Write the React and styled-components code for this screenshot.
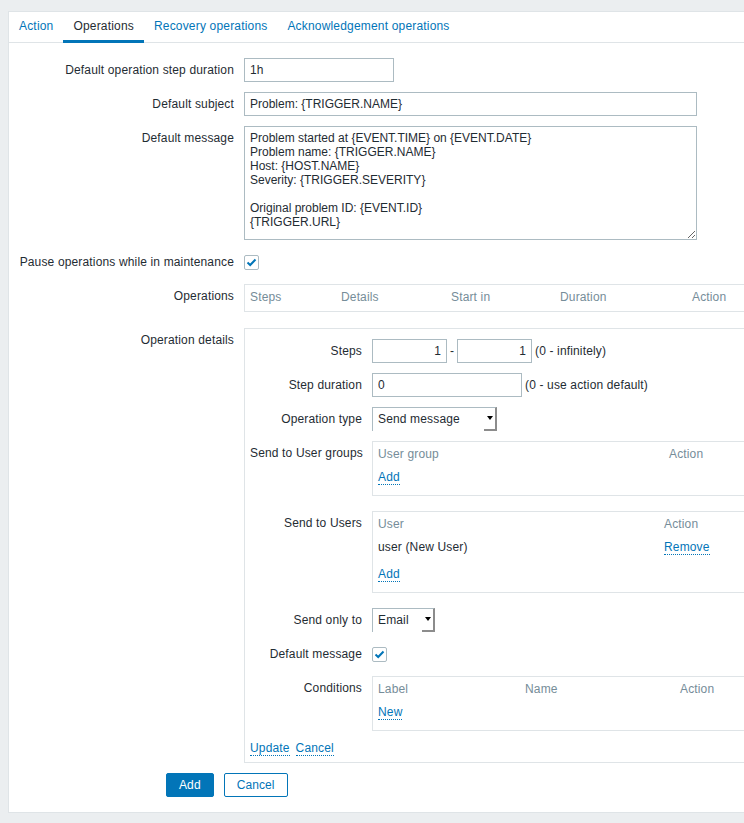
import React from 'react';
import styled, { createGlobalStyle } from 'styled-components';

const GlobalStyle = createGlobalStyle`
  html, body {
    margin: 0;
    overflow: hidden;
    background: #ebeef0;
    font: 12px "Liberation Sans", Arial, sans-serif;
    letter-spacing: 0.15px;
    color: #1f2c33;
  }
`;

const Wrapper = styled.div`
  padding: 11px 0 0 8px;
`;

const Panel = styled.div`
  width: 900px;
  background: #fff;
  border: 1px solid #dfe4e7;
  padding-bottom: 15px;
`;

const TabBar = styled.ul`
  display: flex;
  height: 30px;
  margin: 0;
  padding: 0;
  list-style: none;
  border-bottom: 1px solid #dfe4e7;
`;

const Tab = styled.li`
  box-sizing: border-box;
  height: 31px;
  margin-bottom: -1px;
  padding: 0 10px;
  line-height: 28px;
  letter-spacing: 0.18px;
  color: ${p => (p.$active ? '#1f2c33' : '#0275b8')};
  border-bottom: 3px solid ${p => (p.$active ? '#0275b8' : 'transparent')};
  cursor: pointer;
`;

const Form = styled.div`
  padding: 15px 10px 0;
`;

const Row = styled.div`
  display: grid;
  grid-template-columns: ${p => p.$label}px 1fr;
  column-gap: 10px;
  margin-bottom: ${p => p.$gap ?? 10}px;
`;

const Label = styled.div`
  text-align: right;
  line-height: 24px;
  white-space: nowrap;
`;

const Field = styled.div`
  display: flex;
  align-items: center;
  min-height: 24px;
  white-space: nowrap;
`;

const TextInput = styled.input`
  box-sizing: border-box;
  width: ${p => p.$width}px;
  height: 24px;
  margin: 0;
  padding: 0 5px;
  border: 1px solid #acbbc2;
  font: inherit;
  letter-spacing: 0;
  color: inherit;
  text-align: ${p => p.$align || 'left'};
  outline: none;
`;

const TextArea = styled.textarea`
  display: block;
  box-sizing: border-box;
  width: 453px;
  height: 114px;
  margin: 0;
  padding: 4px 5px;
  border: 1px solid #acbbc2;
  font: 12px/14px "Liberation Sans", Arial, sans-serif;
  letter-spacing: 0;
  color: inherit;
  outline: none;
`;

const Hint = styled.span`
  margin-left: 3px;
`;

const Dash = styled.span`
  width: 10px;
  text-align: center;
`;

const Select = styled.div`
  box-sizing: border-box;
  display: flex;
  width: ${p => p.$width}px;
  height: 24px;
  border: 1px solid #acbbc2;
  border-right: none;
  border-bottom: none;
`;

const SelectText = styled.span`
  flex: 1;
  padding-left: 5px;
  line-height: 22px;
`;

const SelectButton = styled.span`
  box-sizing: border-box;
  width: 13px;
  display: flex;
  align-items: center;
  justify-content: center;
  border-right: 2px solid #8c8c8c;
  border-bottom: 2px solid #8c8c8c;
  border-top: 1px solid #acbbc2;
  margin-top: -1px;
  padding-bottom: 1px;

  &::after {
    content: '';
    border-left: 3px solid transparent;
    border-right: 3px solid transparent;
    border-top: 4px solid #000;
  }
`;

const CheckBox = styled.span`
  box-sizing: border-box;
  display: inline-flex;
  align-items: center;
  justify-content: center;
  width: 15px;
  height: 15px;
  border: 1px solid #acbbc2;
  border-radius: 2px;
  background: #fff;
`;

const ListBox = styled.div`
  box-sizing: border-box;
  width: ${p => p.$width}px;
  border: 1px solid #dfe4e7;
  padding: 1px 5px 3px;
`;

const ListRow = styled.div`
  display: grid;
  grid-template-columns: ${p => p.$cols};
  height: ${p => (p.$head ? 22 : 27)}px;
  line-height: ${p => (p.$head ? 22 : 24)}px;
  color: ${p => (p.$head ? '#768d99' : '#1f2c33')};
  white-space: nowrap;
`;

const Link = styled.a`
  color: #0275b8;
  text-decoration: none;
  border-bottom: 1px dotted #0275b8;
  line-height: 14px;
  cursor: pointer;
`;

const DetailsBox = styled.div`
  box-sizing: border-box;
  width: 560px;
  border: 1px solid #dfe4e7;
  padding: 10px 5px 6px;
`;

const InlineActions = styled.div`
  display: flex;
  gap: 6px;
  line-height: 16px;
`;

const ButtonBar = styled.div`
  display: flex;
  gap: 10px;
  margin: 10px 0 0 147px;
`;

const Button = styled.button`
  height: 24px;
  padding: 0 12px;
  border: 1px solid #0275b8;
  border-radius: 2px;
  background: ${p => (p.$primary ? '#0275b8' : '#fff')};
  color: ${p => (p.$primary ? '#fff' : '#0275b8')};
  font: inherit;
  letter-spacing: 0.1px;
  cursor: pointer;
`;

function Check() {
  return (
    <CheckBox>
      <svg width="11" height="11" viewBox="0 0 11 11">
        <path d="M1.5 5.5 L4.2 8 L9.5 2.5" fill="none" stroke="#0275b8" strokeWidth="2" />
      </svg>
    </CheckBox>
  );
}

const message = `Problem started at {EVENT.TIME} on {EVENT.DATE}
Problem name: {TRIGGER.NAME}
Host: {HOST.NAME}
Severity: {TRIGGER.SEVERITY}

Original problem ID: {EVENT.ID}
{TRIGGER.URL}`;

const tabs = ['Action', 'Operations', 'Recovery operations', 'Acknowledgement operations'];

export default function App() {
  return (
    <Wrapper>
      <GlobalStyle />
      <Panel>
        <TabBar>
          {tabs.map(t => (
            <Tab key={t} $active={t === 'Operations'}>{t}</Tab>
          ))}
        </TabBar>
        <Form>
          <Row $label={215}>
            <Label>Default operation step duration</Label>
            <Field><TextInput $width={150} defaultValue="1h" /></Field>
          </Row>
          <Row $label={215}>
            <Label>Default subject</Label>
            <Field><TextInput $width={453} defaultValue="Problem: {TRIGGER.NAME}" /></Field>
          </Row>
          <Row $label={215}>
            <Label>Default message</Label>
            <div><TextArea defaultValue={message} /></div>
          </Row>
          <Row $label={215}>
            <Label>Pause operations while in maintenance</Label>
            <Field><Check /></Field>
          </Row>
          <Row $label={215} $gap={16}>
            <Label>Operations</Label>
            <ListBox $width={560}>
              <ListRow $head $cols="91px 110px 109px 132px 1fr">
                <span>Steps</span>
                <span>Details</span>
                <span>Start in</span>
                <span>Duration</span>
                <span>Action</span>
              </ListRow>
            </ListBox>
          </Row>
          <Row $label={215} $gap={0}>
            <Label>Operation details</Label>
            <DetailsBox>
              <Row $label={112}>
                <Label>Steps</Label>
                <Field>
                  <TextInput $width={75} $align="right" defaultValue="1" />
                  <Dash>-</Dash>
                  <TextInput $width={75} $align="right" defaultValue="1" />
                  <Hint>(0 - infinitely)</Hint>
                </Field>
              </Row>
              <Row $label={112}>
                <Label>Step duration</Label>
                <Field>
                  <TextInput $width={150} defaultValue="0" />
                  <Hint>(0 - use action default)</Hint>
                </Field>
              </Row>
              <Row $label={112}>
                <Label>Operation type</Label>
                <Field>
                  <Select $width={125}>
                    <SelectText>Send message</SelectText>
                    <SelectButton />
                  </Select>
                </Field>
              </Row>
              <Row $label={112} $gap={15}>
                <Label>Send to User groups</Label>
                <ListBox $width={380}>
                  <ListRow $head $cols="291px 1fr">
                    <span>User group</span>
                    <span>Action</span>
                  </ListRow>
                  <ListRow $cols="1fr">
                    <span><Link>Add</Link></span>
                  </ListRow>
                </ListBox>
              </Row>
              <Row $label={112} $gap={15}>
                <Label>Send to Users</Label>
                <ListBox $width={380}>
                  <ListRow $head $cols="286px 1fr">
                    <span>User</span>
                    <span>Action</span>
                  </ListRow>
                  <ListRow $cols="286px 1fr">
                    <span>user (New User)</span>
                    <span><Link>Remove</Link></span>
                  </ListRow>
                  <ListRow $cols="1fr">
                    <span><Link>Add</Link></span>
                  </ListRow>
                </ListBox>
              </Row>
              <Row $label={112}>
                <Label>Send only to</Label>
                <Field>
                  <Select $width={63}>
                    <SelectText>Email</SelectText>
                    <SelectButton />
                  </Select>
                </Field>
              </Row>
              <Row $label={112}>
                <Label>Default message</Label>
                <Field><Check /></Field>
              </Row>
              <Row $label={112}>
                <Label>Conditions</Label>
                <ListBox $width={380}>
                  <ListRow $head $cols="147px 155px 1fr">
                    <span>Label</span>
                    <span>Name</span>
                    <span>Action</span>
                  </ListRow>
                  <ListRow $cols="1fr">
                    <span><Link>New</Link></span>
                  </ListRow>
                </ListBox>
              </Row>
              <InlineActions>
                <Link>Update</Link>
                <Link>Cancel</Link>
              </InlineActions>
            </DetailsBox>
          </Row>
          <ButtonBar>
            <Button $primary>Add</Button>
            <Button>Cancel</Button>
          </ButtonBar>
        </Form>
      </Panel>
    </Wrapper>
  );
}
